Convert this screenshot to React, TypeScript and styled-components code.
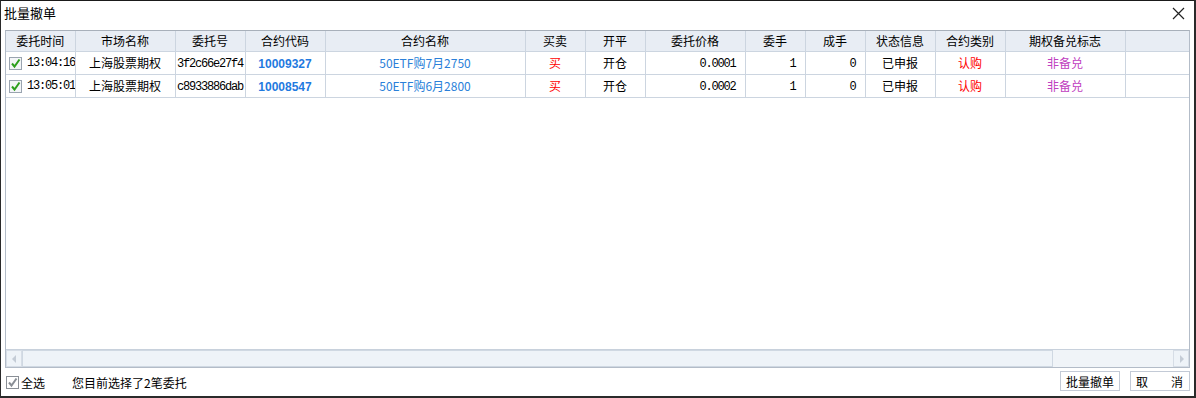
import styled, { createGlobalStyle } from 'styled-components';

const GlobalStyle = createGlobalStyle`
  html, body {
    margin: 0;
    padding: 0;
    background: #2b2b2b;
    font-family: 'Noto Sans CJK SC', 'Liberation Sans', sans-serif;
  }
`;

type Order = {
  time: string;
  market: string;
  orderId: string;
  code: string;
  name: string;
  side: string;
  offset: string;
  price: string;
  qty: number;
  filled: number;
  status: string;
  kind: string;
  cover: string;
};

const orders: Order[] = [
  {
    time: '13:04:16',
    market: '上海股票期权',
    orderId: '3f2c66e27f4',
    code: '10009327',
    name: '50ETF购7月2750',
    side: '买',
    offset: '开仓',
    price: '0.0001',
    qty: 1,
    filled: 0,
    status: '已申报',
    kind: '认购',
    cover: '非备兑',
  },
  {
    time: '13:05:01',
    market: '上海股票期权',
    orderId: 'c8933886dab',
    code: '10008547',
    name: '50ETF购6月2800',
    side: '买',
    offset: '开仓',
    price: '0.0002',
    qty: 1,
    filled: 0,
    status: '已申报',
    kind: '认购',
    cover: '非备兑',
  },
];

const columns = [
  { title: '委托时间', width: 69 },
  { title: '市场名称', width: 100 },
  { title: '委托号', width: 70 },
  { title: '合约代码', width: 80 },
  { title: '合约名称', width: 200 },
  { title: '买卖', width: 60 },
  { title: '开平', width: 60 },
  { title: '委托价格', width: 100 },
  { title: '委手', width: 60 },
  { title: '成手', width: 60 },
  { title: '状态信息', width: 70 },
  { title: '合约类别', width: 70 },
  { title: '期权备兑标志', width: 120 },
  { title: '', width: 64 },
];

function CheckMark({ color }: { color: string }) {
  return (
    <svg width="11" height="11" viewBox="0 0 11 11">
      <path d="M2 5.5 L4.5 8.5 L9.5 1.5" fill="none" stroke={color} strokeWidth="2" />
    </svg>
  );
}

export default function App() {
  return (
    <>
      <GlobalStyle />
      <Window>
        <TitleBar>
          <Title>批量撤单</Title>
          <CloseButton>
            <svg width="13" height="13" viewBox="0 0 13 13">
              <path d="M1 1 L12 12 M12 1 L1 12" stroke="#222" strokeWidth="1.2" />
            </svg>
          </CloseButton>
        </TitleBar>

        <GridFrame>
          <GridBody>
            <Grid>
              <colgroup>
                {columns.map((c, i) => (
                  <col key={i} style={{ width: c.width }} />
                ))}
              </colgroup>
              <thead>
                <tr>
                  {columns.map((c, i) => (
                    <HeadCell key={i}>{c.title}</HeadCell>
                  ))}
                </tr>
              </thead>
              <tbody>
                {orders.map((o) => (
                  <tr key={o.orderId}>
                    <Cell>
                      <TimeWrap>
                        <RowCheck>
                          <CheckMark color="#2ea01e" />
                        </RowCheck>
                        <Mono>{o.time}</Mono>
                      </TimeWrap>
                    </Cell>
                    <Cell $align="center">{o.market}</Cell>
                    <Cell $align="center">
                      <Mono>{o.orderId}</Mono>
                    </Cell>
                    <Cell $align="center">
                      <Code>{o.code}</Code>
                    </Cell>
                    <Cell $align="center" $color="#2a7fd9">
                      {o.name}
                    </Cell>
                    <Cell $align="center" $color="#ff0000">
                      {o.side}
                    </Cell>
                    <Cell $align="center">{o.offset}</Cell>
                    <Cell $align="right">
                      <Mono>{o.price}</Mono>
                    </Cell>
                    <Cell $align="right">
                      <Mono>{o.qty}</Mono>
                    </Cell>
                    <Cell $align="right">
                      <Mono>{o.filled}</Mono>
                    </Cell>
                    <Cell $align="center">{o.status}</Cell>
                    <Cell $align="center" $color="#ff0000">
                      {o.kind}
                    </Cell>
                    <Cell $align="center" $color="#c040c0">
                      {o.cover}
                    </Cell>
                    <Cell />
                  </tr>
                ))}
              </tbody>
            </Grid>
          </GridBody>

          <HScrollbar>
            <ArrowBox>
              <svg width="5" height="8" viewBox="0 0 5 8">
                <path d="M4 0 L0 4 L4 8 Z" fill="#c4ccd6" />
              </svg>
            </ArrowBox>
            <Thumb />
            <Track />
            <ArrowBox>
              <svg width="5" height="8" viewBox="0 0 5 8">
                <path d="M1 0 L5 4 L1 8 Z" fill="#c4ccd6" />
              </svg>
            </ArrowBox>
          </HScrollbar>
        </GridFrame>

        <Footer>
          <SelectAll>
            <FooterCheck>
              <CheckMark color="#8a8f96" />
            </FooterCheck>
            全选
          </SelectAll>
          <Summary>您目前选择了2笔委托</Summary>
          <Spacer />
          <Button>批量撤单</Button>
          <Button $wide>
            <span>取</span>
            <span>消</span>
          </Button>
        </Footer>
      </Window>
    </>
  );
}

const Window = styled.div`
  width: 1195px;
  height: 397px;
  box-sizing: border-box;
  background: #fff;
  border: 1px solid #2a2a2a;
  border-top-color: #1a1a1a;
  display: flex;
  flex-direction: column;
`;

const TitleBar = styled.div`
  height: 29px;
  display: flex;
  align-items: center;
  justify-content: space-between;
  padding: 0 8px 0 3px;
  flex-shrink: 0;
`;

const Title = styled.div`
  font-size: 13px;
  color: #000;
  margin-top: -6px;
`;

const CloseButton = styled.div`
  width: 16px;
  height: 16px;
  display: flex;
  align-items: center;
  justify-content: center;
  margin-top: -5px;
`;

const GridFrame = styled.div`
  margin: 0 4px;
  height: 338px;
  box-sizing: border-box;
  border: 1px solid #b3bcc8;
  border-top-color: #a8b0ba;
  display: flex;
  flex-direction: column;
`;

const GridBody = styled.div`
  flex: 1;
  overflow: hidden;
`;

const Grid = styled.table`
  border-collapse: collapse;
  table-layout: fixed;
  width: 1183px;
  font-size: 12px;
  color: #000;
`;

const HeadCell = styled.th`
  height: 20px;
  padding: 0;
  background: #e8edf4;
  font-weight: normal;
  text-align: center;
  border-right: 1px solid #ccd5e0;
  border-bottom: 1px solid #ccd5e0;
  line-height: 20px;
  white-space: nowrap;

  &:last-child {
    border-right: none;
  }
`;

const Cell = styled.td<{ $align?: 'left' | 'center' | 'right'; $color?: string }>`
  height: 21px;
  padding: ${(p) => (p.$align === 'right' ? '0 9px 0 0' : '0 1px')};
  text-align: ${(p) => p.$align || 'left'};
  color: ${(p) => p.$color || '#000'};
  border-right: 1px solid #ccd5e0;
  border-bottom: 1px solid #ccd5e0;
  white-space: nowrap;
  overflow: hidden;
  line-height: 20px;

  &:last-child {
    border-right: none;
  }
`;

const TimeWrap = styled.div`
  display: flex;
  align-items: center;
  gap: 5px;
  margin-left: 2px;
`;

const RowCheck = styled.span`
  width: 11px;
  height: 11px;
  border: 1px solid #9aa4b0;
  background: #f4f6f8;
  display: inline-flex;
  align-items: center;
  justify-content: center;
  flex-shrink: 0;
`;

const Mono = styled.span`
  font-family: 'Liberation Mono', monospace;
  font-size: 12px;
  letter-spacing: -1.2px;
`;

const Code = styled.span`
  font-family: 'Liberation Sans', sans-serif;
  font-weight: bold;
  color: #1f7ae0;
`;

const HScrollbar = styled.div`
  height: 17px;
  display: flex;
  background: #eef3f8;
  border-top: 1px solid #c8d1dc;
  flex-shrink: 0;
`;

const ArrowBox = styled.div`
  width: 16px;
  box-sizing: border-box;
  border: 1px solid #d6dde6;
  display: flex;
  align-items: center;
  justify-content: center;
`;

const Thumb = styled.div`
  width: 1031px;
  box-sizing: border-box;
  border: 1px solid #cfd8e2;
  background: #eef3f8;
`;

const Track = styled.div`
  flex: 1;
  background: #f0f4f8;
`;

const Footer = styled.div`
  flex: 1;
  display: flex;
  align-items: center;
  padding: 0 4px 0 5px;
  font-size: 12px;
  color: #000;
`;

const SelectAll = styled.label`
  display: flex;
  align-items: center;
  gap: 2px;
`;

const FooterCheck = styled.span`
  width: 11px;
  height: 11px;
  border: 1px solid #8a8f96;
  display: inline-flex;
  align-items: center;
  justify-content: center;
`;

const Summary = styled.span`
  margin-left: 27px;
`;

const Spacer = styled.div`
  flex: 1;
`;

const Button = styled.div<{ $wide?: boolean }>`
  width: 60px;
  height: 20px;
  box-sizing: border-box;
  border: 1px solid #c3cad6;
  background: #fff;
  display: flex;
  align-items: center;
  justify-content: ${(p) => (p.$wide ? 'space-between' : 'center')};
  padding: ${(p) => (p.$wide ? '0 6px 0 5px' : '0')};
  margin-left: 10px;
  font-size: 12px;
  margin-top: -2px;
`;
